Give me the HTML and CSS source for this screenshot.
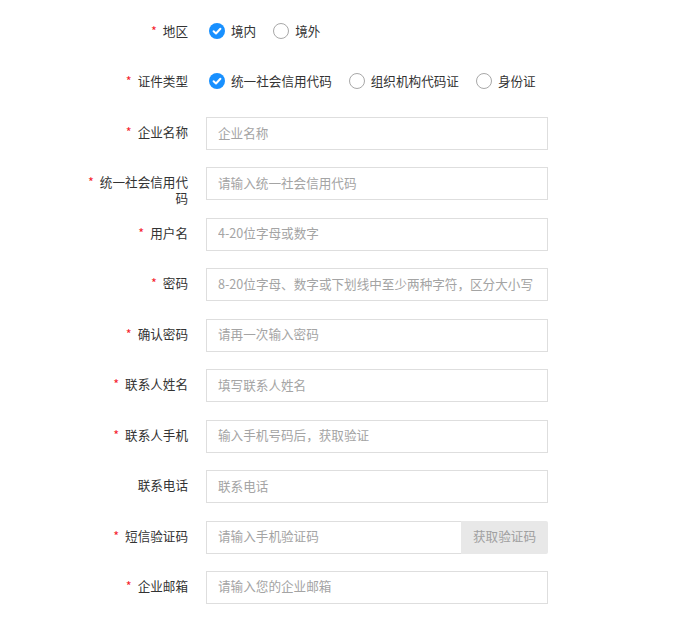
FILE: index.html
```html
<!DOCTYPE html>
<html lang="zh-CN">
<head>
<meta charset="utf-8">
<link rel="stylesheet" href="styles.css">
</head>
<body>
<form class="form">
  <div class="row radio-row">
    <label class="label req">地区</label>
    <div class="field options">
      <span class="opt"><span class="radio checked"><svg viewBox="0 0 16 16" width="16" height="16"><circle cx="8" cy="8" r="8" fill="#1890ff"/><path d="M4.6 8.2 L7 10.5 L11.4 5.8" fill="none" stroke="#fff" stroke-width="2" stroke-linecap="round" stroke-linejoin="round"/></svg></span>境内</span>
      <span class="opt"><span class="radio"></span>境外</span>
    </div>
  </div>
  <div class="row radio-row last-radio">
    <label class="label req">证件类型</label>
    <div class="field options">
      <span class="opt"><span class="radio checked"><svg viewBox="0 0 16 16" width="16" height="16"><circle cx="8" cy="8" r="8" fill="#1890ff"/><path d="M4.6 8.2 L7 10.5 L11.4 5.8" fill="none" stroke="#fff" stroke-width="2" stroke-linecap="round" stroke-linejoin="round"/></svg></span>统一社会信用代码</span>
      <span class="opt"><span class="radio"></span>组织机构代码证</span>
      <span class="opt"><span class="radio"></span>身份证</span>
    </div>
  </div>
  <div class="row">
    <label class="label req">企业名称</label>
    <div class="field"><input class="input" placeholder="企业名称"></div>
  </div>
  <div class="row">
    <label class="label req">统一社会信用代码</label>
    <div class="field"><input class="input" placeholder="请输入统一社会信用代码"></div>
  </div>
  <div class="row">
    <label class="label req">用户名</label>
    <div class="field"><input class="input" placeholder="4-20位字母或数字"></div>
  </div>
  <div class="row">
    <label class="label req">密码</label>
    <div class="field"><input class="input" placeholder="8-20位字母、数字或下划线中至少两种字符，区分大小写"></div>
  </div>
  <div class="row">
    <label class="label req">确认密码</label>
    <div class="field"><input class="input" placeholder="请再一次输入密码"></div>
  </div>
  <div class="row">
    <label class="label req">联系人姓名</label>
    <div class="field"><input class="input" placeholder="填写联系人姓名"></div>
  </div>
  <div class="row">
    <label class="label req">联系人手机</label>
    <div class="field"><input class="input" placeholder="输入手机号码后，获取验证"></div>
  </div>
  <div class="row">
    <label class="label">联系电话</label>
    <div class="field"><input class="input" placeholder="联系电话"></div>
  </div>
  <div class="row">
    <label class="label req">短信验证码</label>
    <div class="field group"><input class="input" placeholder="请输入手机验证码"><span class="btn">获取验证码</span></div>
  </div>
  <div class="row">
    <label class="label req">企业邮箱</label>
    <div class="field"><input class="input" placeholder="请输入您的企业邮箱"></div>
  </div>
</form>
</body>
</html>
```
FILE: styles.css
```css
html, body {
  margin: 0;
  padding: 0;
  background: #fff;
}
body {
  width: 675px;
  height: 618px;
  overflow: hidden;
  font-family: "Noto Sans CJK SC", "Noto Sans", sans-serif;
  font-size: 12.6px;
  color: #333;
}
.form {
  padding-top: 14.5px;
  padding-left: 78px;
}
.row {
  display: flex;
  align-items: flex-start;
  height: 33px;
  margin-bottom: 17.44px;
}
.radio-row {
  margin-bottom: 17px;
}
.radio-row.last-radio {
  margin-bottom: 19.5px;
}
.label {
  width: 110px;
  padding-right: 18px;
  padding-top: 7px;
  text-align: right;
  line-height: 16px;
  flex-shrink: 0;
}
.radio-row .label {
  padding-top: 8.5px;
}
.label.req::before {
  content: "*";
  color: #f5222d;
  margin-right: 6px;
}
.field {
  width: 342px;
  height: 33px;
}
.options {
  display: flex;
  align-items: center;
  gap: 17px;
  padding-left: 3px;
}
.opt {
  display: flex;
  align-items: center;
  gap: 6px;
  line-height: 16px;
}
.radio {
  width: 16px;
  height: 16px;
  box-sizing: border-box;
  border: 1px solid #a8a8a8;
  border-radius: 50%;
  display: inline-block;
}
.radio.checked {
  border: none;
}
.radio svg {
  display: block;
}
.input {
  box-sizing: border-box;
  width: 100%;
  height: 33px;
  border: 1px solid #dedede;
  border-radius: 0;
  padding: 0 11px 3px;
  font-family: inherit;
  font-size: 12.6px;
  color: #333;
  outline: none;
  background: #fff;
  margin: 0;
}
.input::placeholder {
  color: #a4a4a4;
}
.group {
  display: flex;
}
.group .input {
  flex: 1;
  min-width: 0;
  border-right: none;
}
.btn {
  width: 87px;
  height: 33px;
  padding-bottom: 3px;
  box-sizing: border-box;
  flex-shrink: 0;
  background: #e8e8e8;
  color: #a0a0a0;
  border-radius: 0 2px 2px 0;
  display: flex;
  align-items: center;
  justify-content: center;
}
```
